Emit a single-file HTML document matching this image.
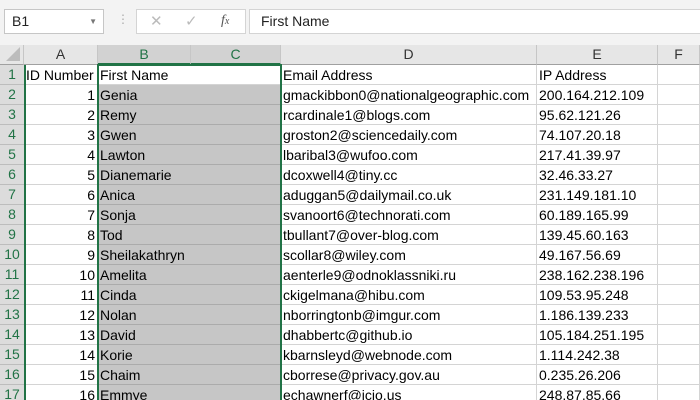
<!DOCTYPE html><html style="width:700px;height:400px;overflow:hidden"><head><style>
body{margin:0;width:700px;height:400px;overflow:hidden;background:#fff;font-family:"Liberation Sans",sans-serif;position:relative}
.top{position:absolute;left:0;top:0;width:700px;height:45px;background:#f3f3f3}
.nb{position:absolute;left:4px;top:9px;width:100px;height:25px;background:#fff;border:1px solid #c6c6c6;box-sizing:border-box;font-size:14px;line-height:23px;padding-left:7px;color:#222}
.fx{position:absolute;left:136px;top:9px;width:110px;height:25px;background:#fff;border:1px solid #d4d4d4;box-sizing:border-box;color:#bbb;font-size:15px}
.fb{position:absolute;left:249px;top:9px;width:451px;height:25px;background:#fff;border:1px solid #d4d4d4;border-right:none;box-sizing:border-box;font-size:14px;line-height:23px;padding-left:11px;color:#222}
.hdr{position:absolute;top:45px;height:20px;background:#e6e6e6;border-right:1px solid #c6c6c6;border-bottom:1px solid #a0a0a0;box-sizing:border-box;font-size:14px;text-align:center;line-height:19px;color:#333}
.rh{position:absolute;left:0;width:24px;height:20px;background:#dcdcdc;border-bottom:1px solid #bdbdbd;box-sizing:border-box;font-size:14px;text-align:center;line-height:19px;color:#217346}
.c{position:absolute;height:20px;border-right:1px solid #d4d4d4;border-bottom:1px solid #d4d4d4;box-sizing:border-box;font-size:14px;line-height:20px;padding:0 2px;white-space:nowrap;overflow:visible;color:#000}
.s{background:#c6c6c6;border-color:#ababab}
.r{text-align:right}
</style></head><body>
<div class="top"></div>
<div class="nb">B1<span style="position:absolute;right:6px;top:0;font-size:8px;color:#777">▼</span></div>
<div style="position:absolute;left:117px;top:12px;color:#aaa;font-size:12px">⋮</div>
<div class="fx"><span style="position:absolute;left:13px;top:2px">✕</span><span style="position:absolute;left:48px;top:2px">✓</span><span style="position:absolute;left:84px;top:3px;color:#555;font-style:italic;font-family:'Liberation Serif',serif;font-size:14px">f<span style="font-size:10px">x</span></span></div>
<div class="fb">First Name</div>
<div class="hdr" style="left:0;width:24px;background:#e6e6e6"><svg width="14" height="14" style="position:absolute;right:3px;bottom:3px"><path d="M14 0L14 14L0 14Z" fill="#bcbcbc"/></svg></div>
<div class="hdr" style="left:24px;width:74px">A</div>
<div class="hdr" style="left:98px;width:93px;background:#d2d2d2;color:#217346;border-bottom:2px solid #217346">B</div>
<div class="hdr" style="left:191px;width:90px;background:#d2d2d2;color:#217346;border-bottom:2px solid #217346">C</div>
<div class="hdr" style="left:281px;width:256px">D</div>
<div class="hdr" style="left:537px;width:121px">E</div>
<div class="hdr" style="left:658px;width:42px">F</div>
<div id="g"></div>
<script>
var d=[["ID Number","First Name","Email Address","IP Address"],[1,"Genia","gmackibbon0@nationalgeographic.com","200.164.212.109"],[2,"Remy","rcardinale1@blogs.com","95.62.121.26"],[3,"Gwen","groston2@sciencedaily.com","74.107.20.18"],[4,"Lawton","lbaribal3@wufoo.com","217.41.39.97"],[5,"Dianemarie","dcoxwell4@tiny.cc","32.46.33.27"],[6,"Anica","aduggan5@dailymail.co.uk","231.149.181.10"],[7,"Sonja","svanoort6@technorati.com","60.189.165.99"],[8,"Tod","tbullant7@over-blog.com","139.45.60.163"],[9,"Sheilakathryn","scollar8@wiley.com","49.167.56.69"],[10,"Amelita","aenterle9@odnoklassniki.ru","238.162.238.196"],[11,"Cinda","ckigelmana@hibu.com","109.53.95.248"],[12,"Nolan","nborringtonb@imgur.com","1.186.139.233"],[13,"David","dhabbertc@github.io","105.184.251.195"],[14,"Korie","kbarnsleyd@webnode.com","1.114.242.38"],[15,"Chaim","cborrese@privacy.gov.au","0.235.26.206"],[16,"Emmye","echawnerf@icio.us","248.87.85.66"]];
var h="";
for(var i=0;i<17;i++){var t=65+i*20,r=d[i],s=i>0?" s":"";
h+='<div class="rh" style="top:'+t+'px;height:15px">'+(i+1)+'</div>'.replace('','');
h+='<div class="c'+(i>0?' r':'')+'" style="left:24px;width:74px;top:'+t+'px">'+r[0]+'</div>';
h+='<div class="c'+s+'" style="left:98px;width:183px;top:'+t+'px;border-right:none">'+r[1]+'</div>';
h+='<div class="c" style="left:281px;width:256px;top:'+t+'px">'+r[2]+'</div>';
h+='<div class="c" style="left:537px;width:121px;top:'+t+'px">'+r[3]+'</div>';
h+='<div class="c" style="left:658px;width:42px;top:'+t+'px"></div>';}
document.getElementById("g").innerHTML=h.replace(/height:15px/g,(i==16?'height:15px':'height:20px'));
</script>
<div style="position:absolute;left:24px;top:65px;width:2px;height:335px;background:#217346"></div>
<div style="position:absolute;left:97px;top:64px;width:185px;height:336px;border:2px solid #217346;border-bottom:none;box-sizing:border-box"></div>
</body></html>
